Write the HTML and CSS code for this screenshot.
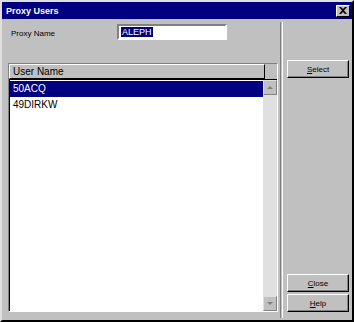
FILE: index.html
```html
<!DOCTYPE html>
<html lang="en">
<head>
    <meta charset="UTF-8">
    <title>Proxy Users</title>
    <link rel="stylesheet" href="styles.css">
</head>
<body>
    <div class="window">
        <div class="titlebar">
            <span class="title">Proxy Users</span>
            <button class="close-x">
                <svg width="8" height="7" viewBox="0 0 8 7"><path d="M0 0h2l2 2 2-2h2L5 3.5 8 7H6L4 5 2 7H0l3-3.5z" fill="#000"/></svg>
            </button>
        </div>
        <div class="content">
            <div class="main">
                <div class="name-row">
                    <label class="label">Proxy Name</label>
                    <div class="field"><span class="sel">ALEPH</span></div>
                </div>
                <div class="list">
                    <div class="list-header">User Name</div>
                    <div class="list-body">
                        <div class="rows">
                            <div class="row selected">50ACQ</div>
                            <div class="row">49DIRKW</div>
                        </div>
                        <div class="scrollbar">
                            <div class="arrow"><span class="tri up"></span></div>
                            <div class="track"></div>
                            <div class="arrow"><span class="tri down"></span></div>
                        </div>
                    </div>
                </div>
            </div>
            <div class="divider"></div>
            <div class="side">
                <button class="btn"><u>S</u>elect</button>
                <div class="bottom-btns">
                    <button class="btn"><u>C</u>lose</button>
                    <button class="btn"><u>H</u>elp</button>
                </div>
            </div>
        </div>
    </div>
</body>
</html>
```

FILE: styles.css
```css
body {
    margin: 0;
    font-family: "Liberation Sans", Arial, sans-serif;
    font-size: 8px;
    background: #c0c0c0;
}
.window {
    width: 354px;
    height: 322px;
    box-sizing: border-box;
    background: #c0c0c0;
    border: 2px solid;
    border-color: #dfdfdf #000 #000 #dfdfdf;
    display: flex;
    flex-direction: column;
}
.titlebar {
    height: 17px;
    background: #000080;
    display: flex;
    align-items: center;
    justify-content: space-between;
    padding: 0 2px 0 4px;
}
.title {
    color: #fff;
    font-weight: bold;
    font-size: 9px;
}
.close-x {
    width: 14px;
    height: 12px;
    padding: 0;
    background: #c0c0c0;
    border: 1px solid;
    border-color: #fff #000 #000 #fff;
    display: flex;
    align-items: center;
    justify-content: center;
}
.content {
    flex: 1;
    display: flex;
    padding: 5px 3px 8px 6px;
}
.main {
    width: 272px;
    display: flex;
    flex-direction: column;
}
.name-row {
    display: flex;
    align-items: center;
    height: 16px;
    margin-bottom: 23px;
}
.label {
    width: 106px;
    padding-left: 3px;
    padding-top: 2px;
}
.field {
    width: 102px;
    height: 12px;
    background: #fff;
    border: 2px solid;
    border-color: #808080 #fff #fff #808080;
    padding: 0 2px;
    display: flex;
    align-items: center;
}
.sel {
    background: #000080;
    color: #fff;
    font-size: 9px;
    line-height: 10px;
    padding: 0 1px;
}
.list {
    flex: 1;
    display: flex;
    flex-direction: column;
    border: 1px solid;
    border-color: #808080 #fff #fff #808080;
}
.list-header {
    height: 15px;
    width: 256px;
    box-sizing: border-box;
    border: 1px solid;
    border-color: #fff #000 #000 #fff;
    font-size: 10px;
    line-height: 13px;
    padding-left: 3px;
}
.list-body {
    flex: 1;
    display: flex;
    background: #fff;
    border-left: 1px solid #000;
    border-top: 1px solid #000;
}
.rows {
    flex: 1;
    padding-top: 1px;
}
.row {
    height: 16px;
    line-height: 16px;
    font-size: 10px;
    padding-left: 3px;
}
.selected {
    background: #000080;
    color: #fff;
}
.scrollbar {
    width: 14px;
    display: flex;
    flex-direction: column;
    background: #e0e0e0;
}
.track {
    flex: 1;
}
.arrow {
    height: 15px;
    box-sizing: border-box;
    background: #c0c0c0;
    border: 1px solid;
    border-color: #dfdfdf #808080 #808080 #dfdfdf;
    display: flex;
    align-items: center;
    justify-content: center;
}
.tri {
    width: 0;
    height: 0;
    border-left: 3px solid transparent;
    border-right: 3px solid transparent;
}
.tri.up {
    border-bottom: 3px solid #808080;
}
.tri.down {
    border-top: 3px solid #808080;
}
.divider {
    width: 1px;
    border-left: 1px solid #808080;
    border-right: 1px solid #fff;
    margin: -2px 0 -6px 2px;
}
.side {
    flex: 1;
    display: flex;
    flex-direction: column;
    justify-content: space-between;
    padding: 36px 0 0 4px;
}
.bottom-btns {
    display: flex;
    flex-direction: column;
    gap: 2px;
}
.btn {
    width: 62px;
    height: 18px;
    padding: 0;
    font-family: "Liberation Sans", Arial, sans-serif;
    font-size: 8px;
    color: #000;
    background: #c0c0c0;
    border: 1px solid;
    border-color: #fff #000 #000 #fff;
    box-shadow: inset -1px -1px #808080;
}
```
